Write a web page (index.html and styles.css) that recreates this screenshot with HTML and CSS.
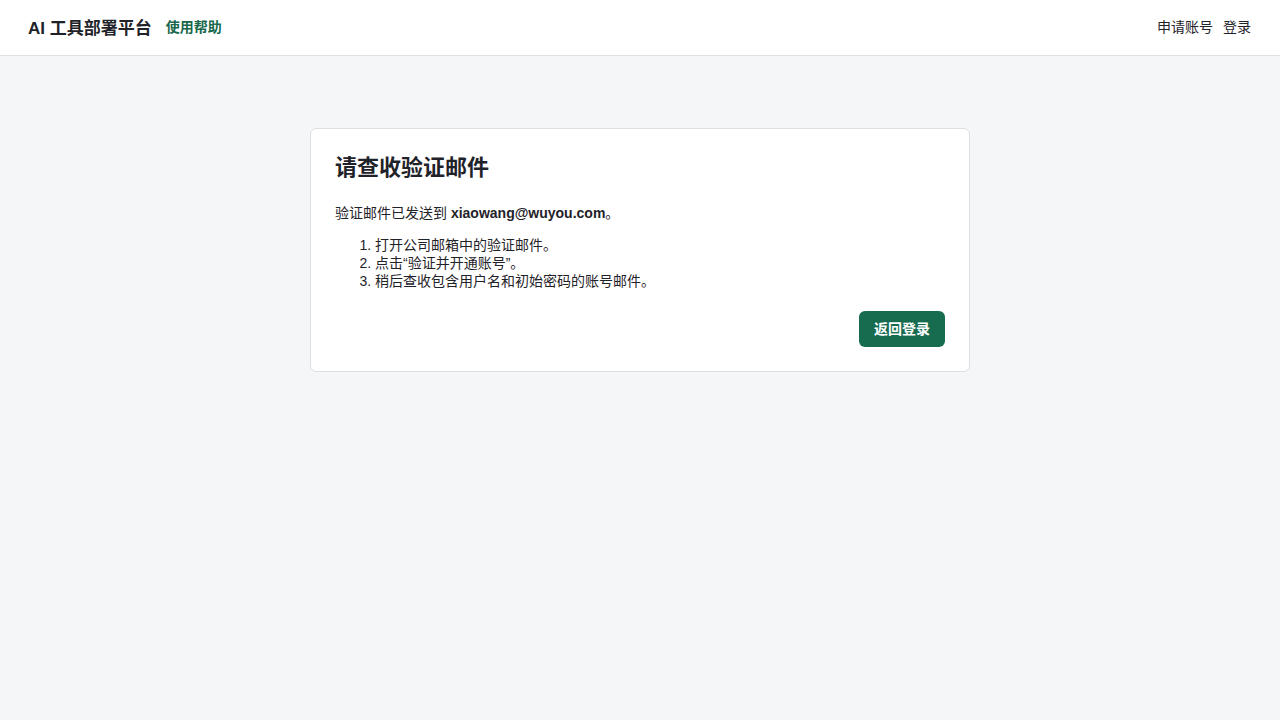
FILE: index.html
```html
<!DOCTYPE html>
<html lang="zh-CN">
<head>
<meta charset="UTF-8">
<meta name="viewport" content="width=device-width, initial-scale=1.0">
<title>请查收验证邮件 - AI 工具部署平台</title>
<link rel="stylesheet" href="styles.css">
</head>
<body>
<header class="topbar">
  <div class="topbar-left">
    <span class="brand">AI 工具部署平台</span>
    <a href="#" class="help-link">使用帮助</a>
  </div>
  <nav class="topbar-right">
    <a href="#" class="nav-link">申请账号</a>
    <a href="#" class="nav-link">登录</a>
  </nav>
</header>
<main class="page">
  <div class="card">
    <h2>请查收验证邮件</h2>
    <p class="sent-to">验证邮件已发送到 <strong>xiaowang@wuyou.com</strong>。</p>
    <ol class="steps">
      <li>打开公司邮箱中的验证邮件。</li>
      <li>点击“验证并开通账号”。</li>
      <li>稍后查收包含用户名和初始密码的账号邮件。</li>
    </ol>
    <div class="actions">
      <button class="primary-btn">返回登录</button>
    </div>
  </div>
</main>
</body>
</html>
```
FILE: styles.css
```css
body {
  font-family: "Liberation Sans", "Noto Sans CJK SC", sans-serif;
  background-color: #f5f6f8;
  color: #1f2329;
  margin: 0;
  padding: 0;
}

.topbar {
  height: 55px;
  background-color: #fff;
  border-bottom: 1px solid #dfe1e5;
  display: flex;
  justify-content: space-between;
  align-items: center;
  padding: 0 29px 0 28px;
}

.topbar-left {
  display: flex;
  align-items: center;
  gap: 14px;
  padding-bottom: 3px;
}

.brand {
  font-size: 17px;
  font-weight: bold;
  color: #1f2329;
}

.help-link {
  font-size: 14px;
  font-weight: bold;
  color: #17684c;
  text-decoration: none;
}

.topbar-right {
  display: flex;
  gap: 10px;
  padding-bottom: 3px;
}

.nav-link {
  font-size: 14px;
  color: #1f2329;
  text-decoration: none;
}

.page {
  display: flex;
  justify-content: center;
  padding-top: 72px;
}

.card {
  width: 610px;
  background-color: #fff;
  border: 1px solid #dcdfe4;
  border-radius: 6px;
  padding: 24px;
}

h2 {
  margin: 0;
  font-size: 22px;
  line-height: 30px;
  padding-bottom: 1px;
}

.sent-to {
  margin: 19px 0 0;
  font-size: 14px;
  line-height: 20px;
}

.steps {
  margin: 13px 0 0;
  padding-left: 40px;
  font-size: 14px;
  line-height: 18px;
}

.actions {
  display: flex;
  justify-content: flex-end;
  margin-top: 21px;
}

.primary-btn {
  font-family: inherit;
  font-size: 14px;
  font-weight: bold;
  height: 36px;
  padding: 0 15px 3px;
  background-color: #176b4f;
  color: white;
  border: none;
  border-radius: 6px;
  cursor: pointer;
}

.primary-btn:hover {
  background-color: #11563f;
}
```
